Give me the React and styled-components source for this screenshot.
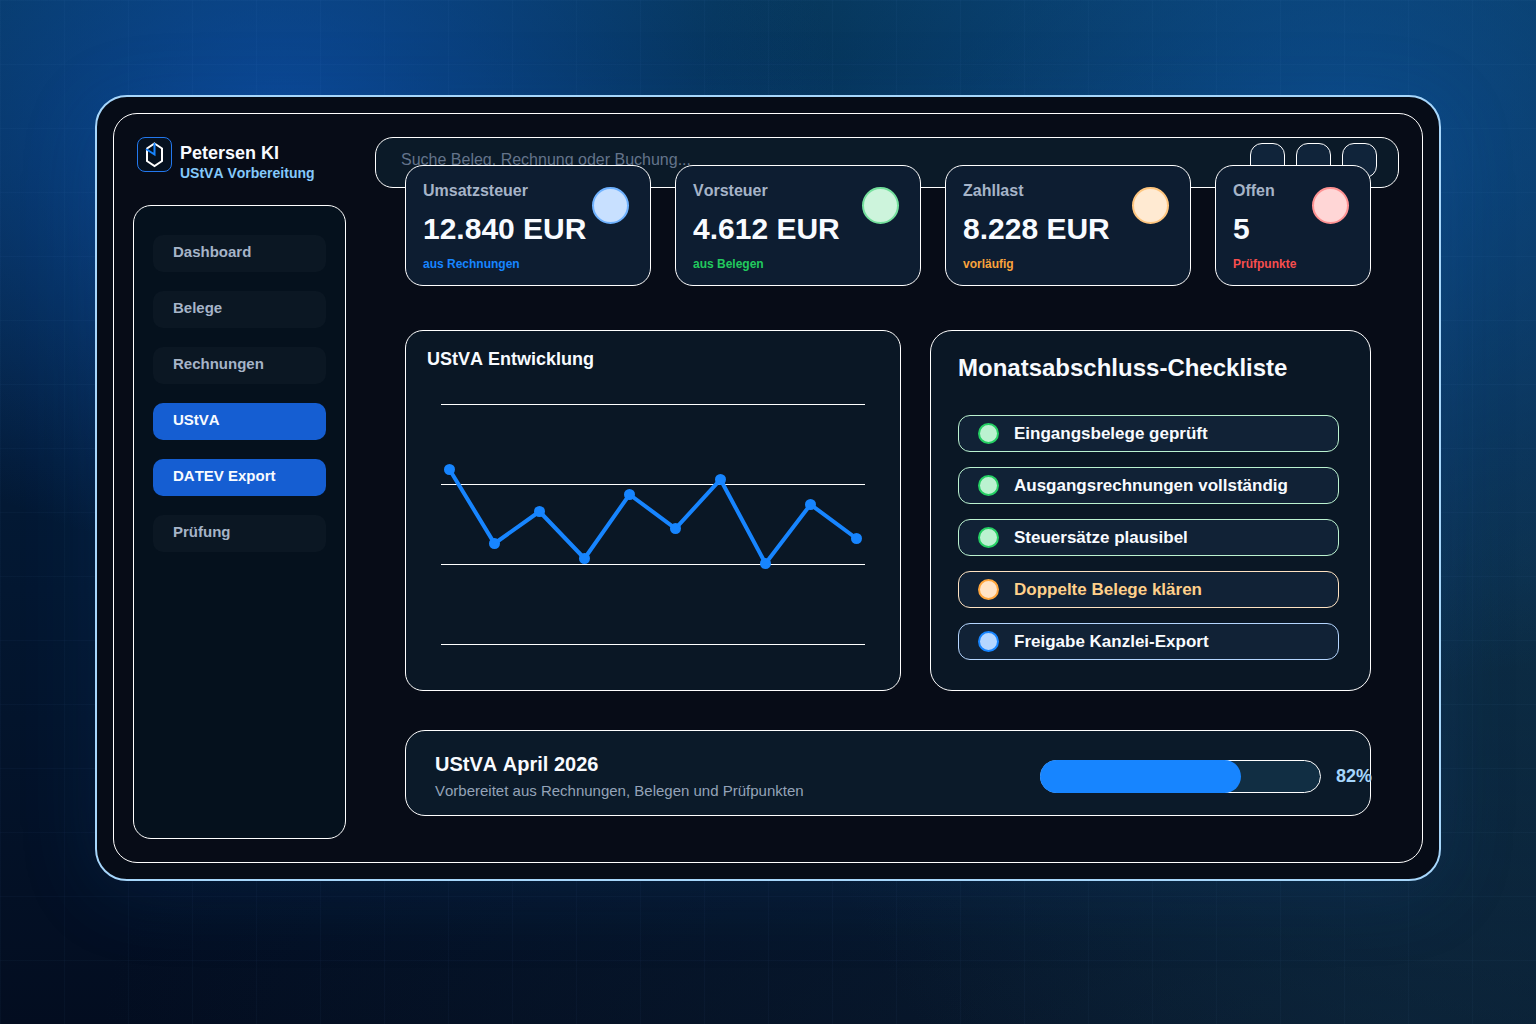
import React from 'react';
import styled, { createGlobalStyle } from 'styled-components';

const GlobalStyle = createGlobalStyle`
  * {
    box-sizing: border-box;
  }
  body {
    margin: 0;
    background: #031024;
    color: #f8fbff;
    font-family: 'Liberation Sans', Arial, sans-serif;
    font-kerning: none;
  }
  h1, h2, p, ul {
    margin: 0;
    padding: 0;
  }
`;

const Page = styled.div`
  min-height: 100vh;
  padding: 95px;
  background:
    linear-gradient(rgba(120, 190, 255, 0.03) 1px, transparent 1px) 0 0 / 64px 64px,
    linear-gradient(90deg, rgba(120, 190, 255, 0.03) 1px, transparent 1px) 0 0 / 64px 64px,
    radial-gradient(ellipse 560px 440px at 280px 120px, rgba(14, 82, 180, 0.7), transparent),
    radial-gradient(ellipse 640px 560px at 1340px 130px, rgba(14, 86, 165, 0.65), transparent),
    radial-gradient(ellipse 760px 800px at 1536px 560px, rgba(18, 60, 84, 0.6), transparent),
    radial-gradient(ellipse 1300px 500px at 1400px 1024px, rgba(16, 42, 64, 0.5), transparent),
    linear-gradient(180deg, #063556 0%, #031a36 45%, #030d20 100%);
`;

const Frame = styled.div`
  padding: 16px;
  border: 2px solid #a6d6fb;
  border-radius: 32px;
  background: #060c17;
  box-shadow: 0 12px 80px rgba(16, 90, 170, 0.16);
`;

const Screen = styled.div`
  display: grid;
  grid-template-columns: 213px 1fr;
  gap: 29px;
  padding: 23px 23px 23px 19px;
  border: 1px solid #fff;
  border-radius: 24px;
  background: #070c17;
`;

const Side = styled.aside`
  display: flex;
  flex-direction: column;
  gap: 20px;
`;

const Brand = styled.header`
  display: flex;
  gap: 8px;
  height: 48px;
  padding-left: 4px;
`;

const BrandName = styled.h1`
  padding-top: 5px;
  font-size: 18px;
  line-height: 22px;
`;

const BrandSub = styled.p`
  color: #84c9fb;
  font-size: 14px;
  font-weight: bold;
  line-height: 18px;
  white-space: nowrap;
`;

const Nav = styled.nav`
  display: flex;
  flex: 1;
  flex-direction: column;
  gap: 19px;
  padding: 29px 19px;
  border: 1px solid #fff;
  border-radius: 18px;
  background: #05111d;
`;

const NavLink = styled.a`
  height: 37px;
  padding-left: 20px;
  border-radius: 10px;
  background: ${(props) => (props.$active ? '#155ed2' : '#0b1723')};
  color: ${(props) => (props.$active ? '#f8fbff' : '#a6b4c8')};
  font-size: 15px;
  font-weight: bold;
  line-height: 34px;
  text-decoration: none;
`;

const Main = styled.main`
  display: flex;
  flex-direction: column;
  padding-bottom: 23px;
`;

const SearchBar = styled.div`
  display: flex;
  align-items: flex-start;
  gap: 11px;
  height: 51px;
  padding: 5px 21px 5px 25px;
  border: 1px solid #fff;
  border-radius: 18px;
  background: #0b1a28;
`;

const SearchInput = styled.input`
  flex: 1;
  min-width: 0;
  height: 34px;
  padding: 0;
  border: 0;
  outline: 0;
  background: transparent;
  color: #f8fbff;
  font: 16px 'Liberation Sans', Arial, sans-serif;

  &::placeholder {
    color: #64748b;
    opacity: 1;
  }
`;

const ToolButton = styled.button`
  width: 35px;
  height: 35px;
  padding: 0;
  border: 1px solid #fff;
  border-radius: 12px;
  background: #10243a;
`;

// the cards overlap the lower half of the search bar
const Content = styled.div`
  z-index: 1;
  display: flex;
  flex-direction: column;
  margin: -23px 28px 0 30px;
`;

const Cards = styled.section`
  display: grid;
  grid-template-columns: 246fr 246fr 246fr 156fr;
  gap: 24px;
`;

const Card = styled.article`
  display: flex;
  justify-content: space-between;
  min-height: 121px;
  padding: 15px 21px 12px 17px;
  border: 1px solid #fff;
  border-radius: 18px;
  background: #0d1d31;
  white-space: nowrap;
`;

const CardText = styled.div`
  display: flex;
  flex-direction: column;
  gap: 8px;
`;

const CardTitle = styled.h2`
  color: #a6b4c8;
  font-size: 16px;
  line-height: 20px;
`;

const CardValue = styled.p`
  font-size: 30px;
  font-weight: bold;
  line-height: 40px;
`;

const CardNote = styled.p`
  color: ${(props) => props.$color};
  font-size: 12px;
  font-weight: bold;
  line-height: 14px;
`;

const CardDot = styled.span`
  flex: none;
  width: 37px;
  height: 37px;
  margin-top: 6px;
  border: 2px solid ${(props) => props.$ring};
  border-radius: 50%;
  background: ${(props) => props.$fill};
`;

const Panels = styled.div`
  display: grid;
  grid-template-columns: 496fr 441fr;
  gap: 29px;
  margin-top: 44px;
`;

const Panel = styled.section`
  min-height: 361px;
  border: 1px solid #fff;
  border-radius: ${(props) => props.$radius};
  background: #0a1725;
`;

const ChartTitle = styled.h2`
  padding: 17px 21px 0;
  font-size: 18px;
  line-height: 22px;
`;

const Chart = styled.svg`
  display: block;
  width: 100%;
  padding: 30px 35px 0;
`;

const ListTitle = styled.h2`
  padding: 22px 27px 0;
  font-size: 24px;
  line-height: 30px;
`;

const List = styled.ul`
  display: flex;
  flex-direction: column;
  gap: 15px;
  padding: 32px 31px 30px 27px;
  list-style: none;
`;

const Item = styled.li`
  display: flex;
  align-items: center;
  gap: 15px;
  height: 37px;
  padding: 0 19px;
  border: 1px solid ${(props) => props.$line};
  border-radius: 12px;
  background: #112236;
  color: ${(props) => props.$text};
  font-size: 17px;
  font-weight: bold;
`;

const ItemDot = styled.span`
  width: 21px;
  height: 21px;
  border: 2px solid ${(props) => props.$ring};
  border-radius: 50%;
  background: ${(props) => props.$fill};
`;

const Status = styled.section`
  display: flex;
  align-items: center;
  height: 86px;
  margin-top: 39px;
  padding: 7px 0 0 29px;
  border: 1px solid #fff;
  border-radius: 20px;
  background: #0b1a29;
`;

const StatusText = styled.div`
  flex: 1;
`;

const StatusTitle = styled.h2`
  font-size: 20px;
  line-height: 28px;
`;

const StatusNote = styled.p`
  color: #94a3b8;
  font-size: 15px;
  line-height: 26px;
`;

const Track = styled.div`
  width: 281px;
  height: 33px;
  margin-right: 15px;
  border: 1px solid #fff;
  border-radius: 17px;
  background: #112e43;
`;

const Fill = styled.div`
  height: 33px;
  margin: -1px;
  border-radius: 17px;
  background: #1785ff;
`;

const Percent = styled.span`
  width: 34px;
  color: #a6d6fb;
  font-size: 18px;
  font-weight: bold;
`;

const navItems = [
  { label: 'Dashboard' },
  { label: 'Belege' },
  { label: 'Rechnungen' },
  { label: 'UStVA', active: true },
  { label: 'DATEV Export', active: true },
  { label: 'Prüfung' },
];

const cards = [
  { title: 'Umsatzsteuer', value: '12.840 EUR', note: 'aus Rechnungen', color: '#1785ff', ring: '#6fb2ff', fill: '#c8e0ff' },
  { title: 'Vorsteuer', value: '4.612 EUR', note: 'aus Belegen', color: '#22c95e', ring: '#74e09c', fill: '#cdf4dc' },
  { title: 'Zahllast', value: '8.228 EUR', note: 'vorläufig', color: '#f9a33c', ring: '#ffc67f', fill: '#ffead2' },
  { title: 'Offen', value: '5', note: 'Prüfpunkte', color: '#f74e4e', ring: '#ff9393', fill: '#ffd6d6' },
];

const green = { line: '#bbf2d0', ring: '#25cf63', fill: '#bbf2d0', text: '#f8fbff' };
const orange = { line: '#ffe3c2', ring: '#ffa63d', fill: '#ffe3c6', text: '#ffd08a' };
const blue = { line: '#b5d6ff', ring: '#1785ff', fill: '#b5d6ff', text: '#f8fbff' };

const checklist = [
  { label: 'Eingangsbelege geprüft', tone: green },
  { label: 'Ausgangsrechnungen vollständig', tone: green },
  { label: 'Steuersätze plausibel', tone: green },
  { label: 'Doppelte Belege klären', tone: orange },
  { label: 'Freigabe Kanzlei-Export', tone: blue },
];

const points = [
  [8.5, 69.5], [53.5, 143.5], [98.5, 111.5], [143.5, 158.5], [188.5, 94.5],
  [234.5, 128.5], [279.5, 79.5], [324.5, 163.5], [369.5, 104.5], [415.5, 138.5],
];

const barWidth = 72;

const Logo = () => (
  <svg width="35" height="35" viewBox="0 0 35 35" fill="none" aria-hidden="true">
    <rect x="0.5" y="0.5" width="34" height="34" rx="7.5" fill="#06111f" stroke="#2378ee" />
    <path d="M17.5 6.5L25 11.5V24L17.5 29L10 24V11.5Z" stroke="#fff" strokeWidth="2" />
    <path d="M9 12L17.5 17.5V6" stroke="#1785ff" strokeWidth="2" />
  </svg>
);

const App = () => {
  return (
    <Page>
      <GlobalStyle />
      <Frame>
        <Screen>
          <Side>
            <Brand>
              <Logo />
              <div>
                <BrandName>Petersen KI</BrandName>
                <BrandSub>UStVA Vorbereitung</BrandSub>
              </div>
            </Brand>
            <Nav>
              {navItems.map((item) => (
                <NavLink key={item.label} href="#" $active={item.active}>
                  {item.label}
                </NavLink>
              ))}
            </Nav>
          </Side>
          <Main>
            <SearchBar>
              <SearchInput type="search" aria-label="Suche" placeholder="Suche Beleg, Rechnung oder Buchung..." />
              <ToolButton type="button" aria-label="Filter" />
              <ToolButton type="button" aria-label="Hinweise" />
              <ToolButton type="button" aria-label="Profil" />
            </SearchBar>
            <Content>
              <Cards>
                {cards.map((card) => (
                  <Card key={card.title}>
                    <CardText>
                      <CardTitle>{card.title}</CardTitle>
                      <CardValue>{card.value}</CardValue>
                      <CardNote $color={card.color}>{card.note}</CardNote>
                    </CardText>
                    <CardDot $ring={card.ring} $fill={card.fill} />
                  </Card>
                ))}
              </Cards>
              <Panels>
                <Panel $radius="18px">
                  <ChartTitle>UStVA Entwicklung</ChartTitle>
                  <Chart viewBox="0 0 424 260" role="img" aria-label="UStVA Entwicklung">
                    {[4.5, 84.5, 164.5, 244.5].map((y) => (
                      <line key={y} x1="0" x2="424" y1={y} y2={y} stroke="#fff" />
                    ))}
                    <polyline points={points.join(' ')} fill="none" stroke="#1785ff" strokeWidth="4" />
                    {points.map(([x, y]) => (
                      <circle key={x} cx={x} cy={y} r="5.5" fill="#1785ff" />
                    ))}
                  </Chart>
                </Panel>
                <Panel $radius="22px">
                  <ListTitle>Monatsabschluss-Checkliste</ListTitle>
                  <List>
                    {checklist.map(({ label, tone }) => (
                      <Item key={label} $line={tone.line} $text={tone.text}>
                        <ItemDot $ring={tone.ring} $fill={tone.fill} />
                        {label}
                      </Item>
                    ))}
                  </List>
                </Panel>
              </Panels>
              <Status>
                <StatusText>
                  <StatusTitle>UStVA April 2026</StatusTitle>
                  <StatusNote>Vorbereitet aus Rechnungen, Belegen und Prüfpunkten</StatusNote>
                </StatusText>
                <Track role="progressbar" aria-label="Fortschritt" aria-valuenow={82}>
                  <Fill style={{ width: `${barWidth}%` }} />
                </Track>
                <Percent>82%</Percent>
              </Status>
            </Content>
          </Main>
        </Screen>
      </Frame>
    </Page>
  );
};

export default App;
